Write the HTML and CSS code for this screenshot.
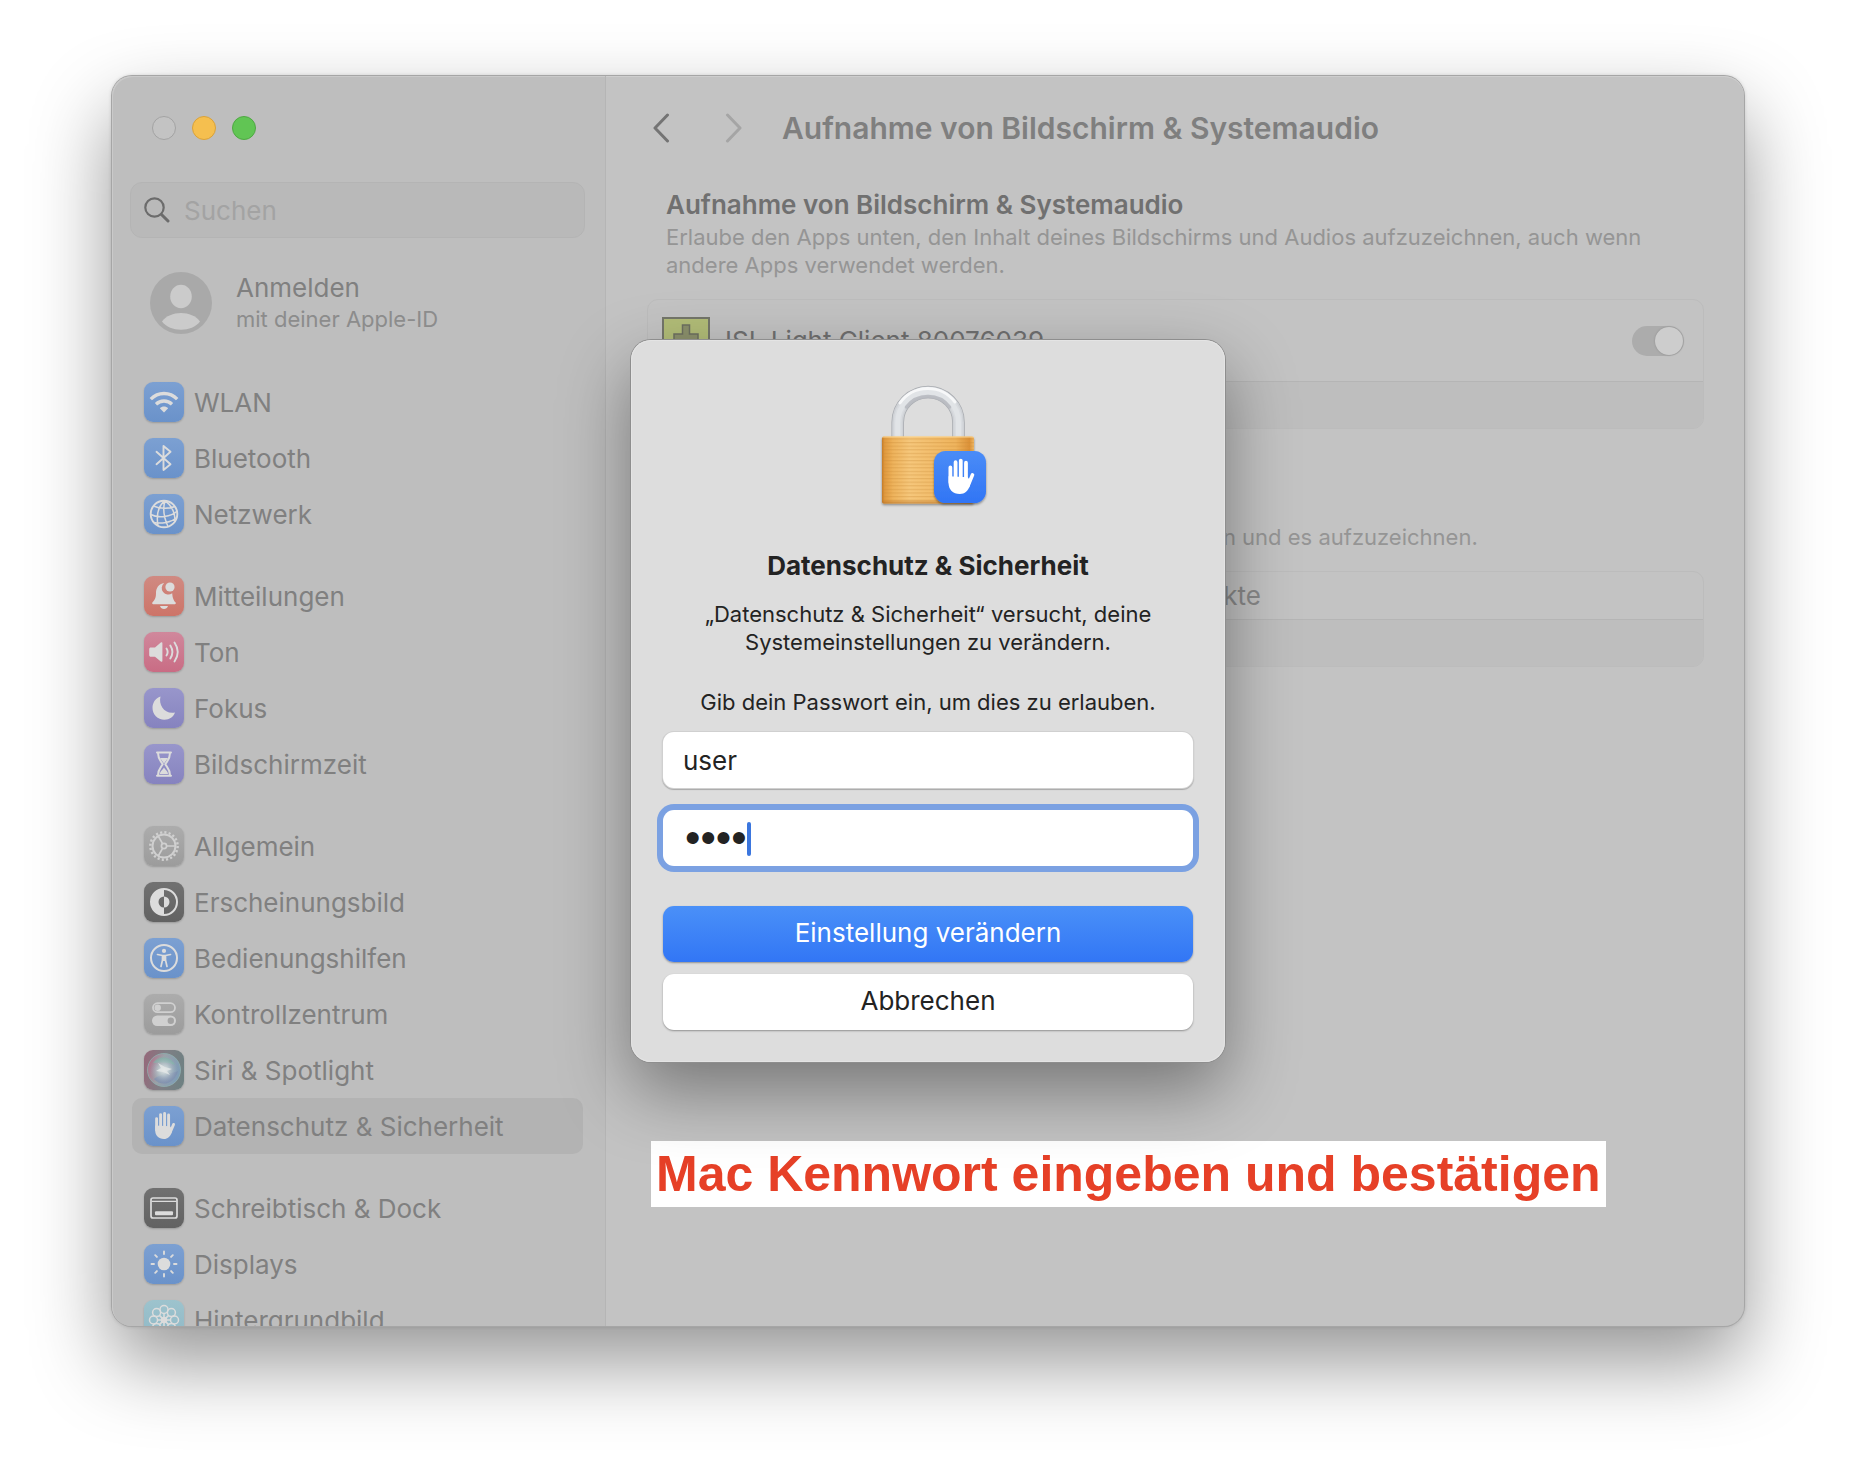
FILE: index.html
```html
<!DOCTYPE html>
<html lang="de">
<head>
<meta charset="utf-8">
<title>Systemeinstellungen</title>
<link rel="stylesheet" href="styles.css">
</head>
<body>
<svg class="defs" width="0" height="0" aria-hidden="true">
  <defs>
    <symbol id="hand" viewBox="0 0 40 40">
      <g fill="none" stroke="currentColor" stroke-width="2.9" stroke-linecap="round">
        <path d="M12.6 12.6V24M16.6 8.6V22M20.6 7.4V22M24.6 9V22"/>
        <path d="M29.6 18.4L26.2 26.5" stroke-width="2.8"/>
      </g>
      <path fill="currentColor" d="M11.2 19.5L26 20.2L28 23L27.6 26.5C26.4 30.6 23.6 33 19.9 33C14.4 33 11.2 29.6 11.2 24.6Z"/>
    </symbol>
  </defs>
</svg>
<div class="window">
  <aside class="sidebar">
    <div class="lights">
      <button class="light" aria-label="Schließen"></button>
      <button class="light yellow" aria-label="Minimieren"></button>
      <button class="light green" aria-label="Vergrößern"></button>
    </div>
    <label class="search">
      <svg width="26" height="26" viewBox="0 0 26 26" fill="none" stroke="#6c6c6c" stroke-linecap="round"><circle cx="10.5" cy="10.5" r="9.2" stroke-width="2.2"/><path d="M17.5 17.5L24 24" stroke-width="3"/></svg>
      <input type="search" placeholder="Suchen" aria-label="Suchen">
    </label>
    <a class="account" href="#anmelden">
      <svg width="62" height="62" viewBox="0 0 62 62"><circle cx="31" cy="31" r="31" fill="#a9a9a9"/><ellipse cx="31" cy="24.5" rx="10.8" ry="11.8" fill="#cbcbcb"/><path d="M12 49.5C20 38 42 38 50 49.5C42 60.500 20 60.500 12 49.5Z" fill="#cbcbcb"/></svg>
      <span class="account-text"><span class="account-name">Anmelden</span><span class="account-sub">mit deiner Apple-ID</span></span>
    </a>
    <nav class="nav">
      <div class="group">
        <a class="item" href="#wlan"><svg class="icon blue" viewBox="0 0 40 40"><g fill="none" stroke="currentColor" stroke-width="3.3"><path d="M6.8 17.200C14 9.600 26 9.600 33.200 17.200"/><path d="M12 22.300C16.500 17.900 23.500 17.900 28 22.300"/></g><path fill="currentColor" d="M15.800 26.200C18 24 22 24 24.200 26.200L20 30.500Z"/></svg>WLAN</a>
        <a class="item" href="#bluetooth"><svg class="icon blue" viewBox="0 0 40 40"><path fill="none" stroke="currentColor" stroke-width="1.900" stroke-linejoin="round" stroke-linecap="round" d="M12.500 13.800L26.500 26.200L19.500 32V8L26.500 13.800L12.500 26.200"/></svg>Bluetooth</a>
        <a class="item" href="#netzwerk"><svg class="icon blue" viewBox="0 0 40 40"><g fill="none" stroke="currentColor" stroke-width="1.500"><circle cx="20" cy="20" r="13.300" stroke-width="1.900"/><path d="M21 6.700C14 12 12 20 14 32M21 6.700C18.500 15 20 24 24 32.500M21 6.700C27 11 31 18 31 27M9.500 12C16 15 25 15 31 12.500M6.800 20.500C14 24.500 27 23 33.200 17M10 28.500C17 30 27 28.500 32.500 24"/></g></svg>Netzwerk</a>
      </div>
      <div class="group">
        <a class="item" href="#mitteilungen"><svg class="icon red" viewBox="0 0 40 40"><path fill="currentColor" d="M20.200 7C14.500 8 12 12 12 17C12 22.500 10.500 24 8.500 26.300C7.800 27.300 8.200 28.200 9.200 28.200H30.800C31.800 28.200 32.200 27.300 31.500 26.300C29.800 24.500 28.600 22.500 28.200 17.200A6.200 6.200 0 0 1 20.200 7ZM16 30H24C23 34 17 34 16 30Z"/><circle cx="26" cy="11" r="4.600" fill="currentColor"/></svg>Mitteilungen</a>
        <a class="item" href="#ton"><svg class="icon pink" viewBox="0 0 40 40"><path fill="currentColor" d="M7 15.500H11L16.800 10.600C17.800 9.900 18.400 10.200 18.400 11.200V28.800C18.400 29.800 17.800 30.100 16.800 29.400L11 24.800H7C5.800 24.800 5.200 24.200 5.200 23V17.300C5.200 16.100 5.800 15.500 7 15.500Z"/><path fill="none" stroke="currentColor" stroke-width="1.900" stroke-linecap="round" d="M22.500 16.500Q24.800 20 22.500 23.500M26.300 13.500Q30.500 20 26.300 26.500M30.500 10.500Q37 20 30.500 29.500"/></svg>Ton</a>
        <a class="item" href="#fokus"><svg class="icon violet" viewBox="0 0 40 40"><path fill="currentColor" d="M16.500 8.500C14.300 17 20.500 26.500 31 24.500C29.500 29 25.500 31.700 20.500 31.700C13.500 31.700 8.500 26.500 8.500 20C8.500 14.800 11.500 10 16.500 8.500Z"/></svg>Fokus</a>
        <a class="item" href="#bildschirmzeit"><svg class="icon violet" viewBox="0 0 40 40"><path fill="none" stroke="currentColor" stroke-width="2" stroke-linejoin="round" d="M13 8.500H27M13 31.800H27M14 9C14 15.500 17 17 18.700 20.200C17 23.400 14 25 14 31.500M26 9C26 15.500 23 17 21.300 20.200C23 23.400 26 25 26 31.500" stroke-linecap="round"/><path fill="currentColor" d="M16 14H24L20 19.500ZM16 30C16 27 19 25.500 20 23.500C21 25.500 24 27 24 30Z"/></svg>Bildschirmzeit</a>
      </div>
      <div class="group">
        <a class="item" href="#allgemein"><svg class="icon gray" viewBox="0 0 40 40"><g fill="none" stroke="currentColor"><circle cx="20" cy="20" r="11.500" stroke-width="2"/><circle cx="20" cy="20" r="13.700" stroke-width="2.400" stroke-dasharray="2.150 2.150"/><circle cx="20" cy="20" r="2.600" stroke-width="1.700"/><path stroke-width="1.700" d="M22.600 20H31M18.700 17.800L14.500 10.500M18.700 22.200L14.500 29.500"/></g></svg>Allgemein</a>
        <a class="item" href="#erscheinungsbild"><svg class="icon dark" viewBox="0 0 40 40"><circle cx="20" cy="20" r="13" fill="none" stroke="currentColor" stroke-width="2"/><path fill="currentColor" fill-rule="evenodd" d="M20 7A13 13 0 0 0 20 33V25.500A5.500 5.500 0 0 1 20 14.500ZM20 14.500A5.500 5.500 0 0 1 20 25.500Z"/></svg>Erscheinungsbild</a>
        <a class="item" href="#bedienungshilfen"><svg class="icon blue" viewBox="0 0 40 40"><circle cx="20" cy="20" r="13" fill="none" stroke="currentColor" stroke-width="2"/><circle cx="20" cy="12.900" r="2.100" fill="currentColor"/><path fill="none" stroke="currentColor" stroke-width="1.700" stroke-linecap="round" stroke-linejoin="round" d="M13.500 16.500L18.500 17.500H21.500L26.500 16.500M18.500 18V22L17 28.500M21.500 18V22L23 28.500"/><path fill="currentColor" d="M18 17.500H22V23H18Z"/></svg>Bedienungshilfen</a>
        <a class="item" href="#kontrollzentrum"><svg class="icon gray" viewBox="0 0 40 40"><rect x="9" y="9.200" width="22" height="9" rx="4.500" fill="none" stroke="currentColor" stroke-width="1.800"/><circle cx="13.700" cy="13.700" r="3.200" fill="currentColor"/><rect x="8" y="21.500" width="24" height="10.500" rx="5.200" fill="currentColor"/><circle cx="26.800" cy="26.700" r="3.200" fill="#a3a3a3"/></svg>Kontrollzentrum</a>
        <a class="item" href="#siri"><svg class="icon siri" viewBox="0 0 40 40">
          <defs><radialGradient id="glow"><stop offset="0" stop-color="#e6eaea"/><stop offset=".4" stop-color="#c3d0d4" stop-opacity=".75"/><stop offset="1" stop-color="#9ab" stop-opacity="0"/></radialGradient><linearGradient id="orb" x1="0" y1=".3" x2="1" y2=".6"><stop offset="0" stop-color="#b07089"/><stop offset=".4" stop-color="#9ba2a8"/><stop offset="1" stop-color="#7d9cb8"/></linearGradient></defs>
          <circle cx="20" cy="20" r="16.500" fill="url(#orb)" stroke="#8fb0ae" stroke-width=".8"/><path d="M9 13C15 5 27 6 31 15C25 12 15 12 9 13Z" fill="#7bb3a3" opacity=".7"/><path d="M10 29C17 23 28 24 34 21C31 33 18 38 10 29Z" fill="#7a8aae" opacity=".7"/><circle cx="20" cy="20" r="14" fill="url(#glow)"/><path d="M14 13L21 17L28 19L23 21L26 25L19 22L12 21L17 18Z" fill="#e4e7e7" opacity=".8"/></svg>Siri &amp; Spotlight</a>
        <a class="item selected" href="#datenschutz" aria-current="page"><svg class="icon blue" viewBox="0 0 40 40"><use href="#hand"/></svg>Datenschutz &amp; Sicherheit</a>
      </div>
      <div class="group">
        <a class="item" href="#schreibtisch"><svg class="icon dark" viewBox="0 0 40 40"><g fill="none" stroke="currentColor"><rect x="7" y="10" width="26" height="20" rx="2" stroke-width="1.700"/><path stroke-width="1.300" d="M7.500 13.300H32.500"/></g><rect x="11" y="23.200" width="18" height="4" rx="1" fill="currentColor"/></svg>Schreibtisch &amp; Dock</a>
        <a class="item" href="#displays"><svg class="icon blue" viewBox="0 0 40 40"><circle cx="20" cy="20" r="6.300" fill="currentColor"/><path fill="none" stroke="currentColor" stroke-width="1.900" stroke-linecap="round" d="M20 7.500V10M20 30V32.500M7.500 20H10M30 20H32.500M11.200 11.200L12.900 12.900M27.100 27.100L28.800 28.800M28.800 11.200L27.100 12.900M12.900 27.100L11.200 28.800"/></svg>Displays</a>
        <a class="item" href="#hintergrundbild"><svg class="icon cyan" viewBox="0 0 40 40"><g fill="none" stroke="currentColor" stroke-width="1.500"><circle cx="20" cy="20" r="2.500"/><circle cx="20" cy="9.500" r="4"/><circle cx="27.400" cy="12.600" r="4"/><circle cx="30.500" cy="20" r="4"/><circle cx="27.400" cy="27.400" r="4"/><circle cx="20" cy="30.500" r="4"/><circle cx="12.600" cy="27.400" r="4"/><circle cx="9.500" cy="20" r="4"/><circle cx="12.600" cy="12.600" r="4"/><path d="M20 13.500V26.500M13.500 20H26.500M15.400 15.400L24.600 24.600M24.600 15.400L15.400 24.600"/></g></svg>Hintergrundbild</a>
      </div>
    </nav>
  </aside>
  <main class="content">
    <header class="toolbar">
      <button class="arrow" aria-label="Zurück"><svg width="18" height="30" viewBox="0 0 18 30"><path d="M15.500 2L3 15L15.500 28"/></svg></button>
      <button class="arrow off" aria-label="Vorwärts" disabled><svg width="18" height="30" viewBox="0 0 18 30"><path d="M2.500 2L15 15L2.500 28"/></svg></button>
      <h1>Aufnahme von Bildschirm &amp; Systemaudio</h1>
    </header>
    <section class="section">
      <h2>Aufnahme von Bildschirm &amp; Systemaudio</h2>
      <p class="hint">Erlaube den Apps unten, den Inhalt deines Bildschirms und Audios aufzuzeichnen, auch wenn andere Apps verwendet werden.</p>
      <div class="card">
        <div class="row app">
          <svg width="48" height="48" viewBox="0 0 48 48"><rect x="1" y="1" width="46" height="46" fill="#b2bd78" stroke="#74766a" stroke-width="2"/><path d="M20.500 8H27.500V17H36V28H27.500V38H20.500V28H12V17H20.500Z" fill="#8c916c" stroke="#6d7060" stroke-width="1.500"/></svg>
          <label for="isl">ISL Light Client 80076039</label>
          <input id="isl" class="switch" type="checkbox" role="switch" checked>
        </div>
        <div class="row foot"></div>
      </div>
    </section>
    <section class="section second">
      <p class="hint">Erlaube den Apps unten, dein Systemaudio zu erhalten und es aufzuzeichnen.</p>
      <div class="card">
        <div class="row empty">Keine Objekte</div>
        <div class="row foot"></div>
      </div>
    </section>
    <p class="note">Mac Kennwort eingeben und bestätigen</p>
  </main>
  <form class="dialog" role="dialog" aria-labelledby="dialog-title">
    <svg class="lock" width="150" height="150" viewBox="-6 0 150 150" aria-hidden="true">
      <defs>
        <linearGradient id="brass"><stop offset="0" stop-color="#c57b28"/><stop offset=".03" stop-color="#e19a3f"/><stop offset=".12" stop-color="#eeb35c"/><stop offset=".3" stop-color="#f6c77b"/><stop offset=".8" stop-color="#efb45d"/><stop offset=".95" stop-color="#dc9137"/><stop offset="1" stop-color="#eeb765"/></linearGradient>
        <linearGradient id="badge" x2="0" y2="1"><stop offset="0" stop-color="#4a8cf7"/><stop offset="1" stop-color="#3175f5"/></linearGradient>
        <pattern id="lines" width="6" height="3.600" patternUnits="userSpaceOnUse"><rect width="6" height="1.200" fill="#c98835" opacity=".32"/></pattern>
        <filter id="soft" x="-20%" y="-20%" width="140%" height="150%"><feDropShadow dx="0" dy="1.500" stdDeviation="1.200" flood-opacity=".4"/></filter>
        <linearGradient id="fade" x2="0" y2="1"><stop offset="0" stop-color="#ffdc9b"/><stop offset=".03" stop-color="#f6c77b" stop-opacity="0"/><stop offset=".94" stop-color="#b87328" stop-opacity="0"/><stop offset="1" stop-color="#b87328" stop-opacity=".7"/></linearGradient>
      </defs>
      <g fill="none">
        <path d="M38.700 67V52.400A30.400 30.400 0 0 1 99.500 52.400V67" stroke="#a9acb1" stroke-width="12.600"/>
        <path d="M38.700 67V52.400A30.400 30.400 0 0 1 99.500 52.400V67" stroke="#cfd2d6" stroke-width="11"/>
        <path d="M38.700 67V52.400A30.400 30.400 0 0 1 99.500 52.400V67" stroke="#d9dce0" stroke-width="8"/>
        <path d="M38.700 67V52.400A30.400 30.400 0 0 1 99.500 52.400V67" stroke="#e1e4e7" stroke-width="5"/>
        <path d="M47.500 37A27.300 27.300 0 0 1 90.500 37" stroke="#b4b7bd" stroke-width="3.500" stroke-linecap="round" opacity=".8"/>
        <path d="M41 33A34 34 0 0 1 96 32" stroke="#f7f8f9" stroke-width="3" stroke-linecap="round"/>
      </g>
      <rect x="23" y="66.500" width="92" height="67" rx="2" fill="url(#brass)" filter="url(#soft)"/>
      <rect x="23" y="68" width="92" height="63" fill="url(#lines)"/>
      <rect x="23" y="66.500" width="92" height="67" rx="2" fill="url(#fade)"/>
      <rect x="75" y="81" width="52" height="52" rx="11.500" fill="url(#badge)" filter="url(#soft)"/>
      <use href="#hand" x="75" y="81" width="52" height="52" color="#fff"/>
    </svg>
    <h2 id="dialog-title">Datenschutz &amp; Sicherheit</h2>
    <p class="ask">„Datenschutz &amp; Sicherheit“ versucht, deine<br>Systemeinstellungen zu verändern.</p>
    <p class="prompt">Gib dein Passwort ein, um dies zu erlauben.</p>
    <input class="field" type="text" value="user" aria-label="Benutzername">
    <div class="secret">
      <input class="field focused" type="password" value="user" aria-label="Passwort">
      <span class="caret"></span>
    </div>
    <button class="btn primary" type="button">Einstellung verändern</button>
    <button class="btn" type="button">Abbrechen</button>
  </form>
</div>
</body>
</html>
```
FILE: styles.css
```css
* { box-sizing: border-box; }
body {
  margin: 0;
  height: 100vh;
  padding: 76px 112px 148px;
  background: #fff;
  font-family: Inter, "Liberation Sans", sans-serif;
  font-size: 26px;
  color: #808080;
  overflow: hidden;
}
h1, h2, p { margin: 0; }
a { color: inherit; text-decoration: none; }
button, input { font: inherit; color: inherit; margin: 0; border: 0; padding: 0; }
.defs { position: absolute; }

.window {
  position: relative;
  display: flex;
  height: 100%;
  border-radius: 20px;
  background: #c3c3c3;
  box-shadow: 0 0 0 1px #a6a6a6, 0 0 4px rgba(0,0,0,.2), 0 36px 80px rgba(0,0,0,.42);
}

.sidebar {
  flex: 0 0 494px;
  display: flex;
  flex-direction: column;
  padding: 40px 20px 0 18px;
  background: #bebebe;
  border-right: 1px solid #b5b5b5;
  border-radius: 20px 0 0 20px;
  box-shadow: inset 1px 1px 0 #cacaca;
  overflow: hidden;
}
.lights { display: flex; gap: 16px; padding-left: 22px; }
.light { width: 24px; height: 24px; border-radius: 50%; background: #c3c3c3; border: 1px solid #a3a3a3; }
.yellow { background: #f5bf4f; border-color: #d9a23a; }
.green { background: #61c554; border-color: #4fa843; }

.search {
  flex: none;
  display: flex;
  align-items: center;
  gap: 14px;
  height: 56px;
  margin-top: 42px;
  padding: 0 13px;
  border: 1px solid #b4b4b4;
  border-radius: 12px;
  background: #b9b9b9;
}
.search input { flex: 1; min-width: 0; background: none; outline: 0; }
.search input::placeholder { color: #a3a3a3; opacity: 1; }

.account { display: flex; align-items: center; gap: 24px; margin-top: 34px; padding-left: 20px; }
.account svg { flex: none; }
.account-text { display: flex; flex-direction: column; }
.account-name { line-height: 32px; }
.account-sub { font-size: 22px; line-height: 30px; color: #8c8c8c; }

.nav { display: flex; flex-direction: column; gap: 26px; margin: 40px 2px 0; }
.item {
  display: flex;
  align-items: center;
  gap: 10px;
  height: 56px;
  padding-left: 12px;
  border-radius: 10px;
  white-space: nowrap;
}
.selected { background: #b3b3b3; }
.icon {
  flex: none;
  width: 40px;
  height: 40px;
  border-radius: 9px;
  color: #dcdcdc;
  box-shadow: 0 1px 2px rgba(0,0,0,.2);
}
.blue { background: linear-gradient(#7ca0d2, #6a92ca); }
.red { background: linear-gradient(#d08a82, #cd7468); }
.pink { background: linear-gradient(#d0889c, #c96c84); }
.violet { background: linear-gradient(#9896cb, #8683bf); }
.gray { background: linear-gradient(#acacac, #9c9c9c); color: #d0d0d0; }
.dark { background: linear-gradient(#717171, #626262); }
.cyan { background: linear-gradient(#9dc3cd, #8fb8c6); }
.siri { background: linear-gradient(100deg, #96687a, #7f7f85 50%, #6c8182); }

.content { position: relative; flex: 1; min-width: 0; padding: 28px 40px 0 41px; border-radius: 0 20px 20px 0; box-shadow: inset 0 1px 0 #cecece; }
.toolbar { display: flex; align-items: center; height: 48px; }
.arrow { display: flex; justify-content: center; width: 28px; background: none; }
.arrow path { fill: none; stroke: #747474; stroke-width: 3; stroke-linecap: round; stroke-linejoin: round; }
.off { margin-left: 45px; }
.off path { stroke: #a5a5a5; }
h1 { margin-left: 34px; font-size: 30px; font-weight: 600; line-height: 36px; color: #7f7f7f; }
.section { margin-top: 37px; }
.second { margin-top: 94px; }
.section h2 { margin: 0 19px 2px; font-size: 26px; font-weight: 600; line-height: 32px; color: #707070; }
.hint { margin: 0 40px 20px 19px; font-size: 22px; line-height: 28px; color: #959595; }
.card { border: 1px solid #bcbcbc; border-radius: 11px; overflow: hidden; }
.row { display: flex; align-items: center; height: 47px; }
.app { height: 81px; padding: 0 19px 0 14px; color: #707070; }
.app label { flex: 1; margin-left: 15px; }
.foot { background: #bebebe; border-top: 1px solid #b5b5b5; }
.empty { justify-content: center; color: #898989; }
.switch {
  appearance: none;
  display: flex;
  justify-content: flex-end;
  width: 52px;
  height: 30px;
  padding: 1px;
  border-radius: 15px;
  background: #acacac;
}
.switch::before { content: ""; width: 28px; height: 28px; border-radius: 50%; background: #cdcdcd; box-shadow: 0 0 2px #888; }

.note {
  position: absolute;
  left: 45px;
  bottom: 119px;
  padding: 0 5px;
  background: #fff;
  color: #e64027;
  font: bold 50px/66px "Liberation Sans", sans-serif;
  white-space: nowrap;
}

.dialog {
  position: absolute;
  top: 50%;
  left: 50%;
  transform: translate(-50%, -50%);
  display: flex;
  flex-direction: column;
  width: 594px;
  padding: 30px 32px 32px;
  border-radius: 20px;
  background: #ddd;
  color: #232323;
  text-align: center;
  box-shadow: inset 0 0 0 1px #e4e4e4, 0 0 0 1px #8e8e8e, 0 28px 70px rgba(0,0,0,.4);
}
.lock { align-self: center; }
.dialog h2 { margin-top: 30px; font-size: 26px; font-weight: 700; line-height: 32px; }
.ask { margin-top: 18px; font-size: 22px; line-height: 28px; }
.prompt { margin: 32px 0 16px; font-size: 22px; line-height: 28px; }
.field {
  width: 100%;
  height: 56px;
  padding: 0 20px;
  border-radius: 11px;
  background: #fff;
  outline: 0;
  box-shadow: 0 0 0 1px #d0d0d0, 0 1px 1px 1px #a8a8a8;
}
.secret { position: relative; display: flex; margin: 22px 0 40px; }
.focused { padding: 0 22px; font: 44px "Liberation Sans", sans-serif; box-shadow: 0 0 0 6px #7ba1e2; }
.caret { position: absolute; left: 84px; top: 12px; width: 4px; height: 34px; border-radius: 2px; background: #3b76de; }
.btn { height: 56px; padding-bottom: 3px; border-radius: 11px; background: #fff; box-shadow: 0 1px 2px rgba(0,0,0,.35); }
.primary { margin-bottom: 12px; color: #fff; background: linear-gradient(#4a90f8, #3276f5); }
```
